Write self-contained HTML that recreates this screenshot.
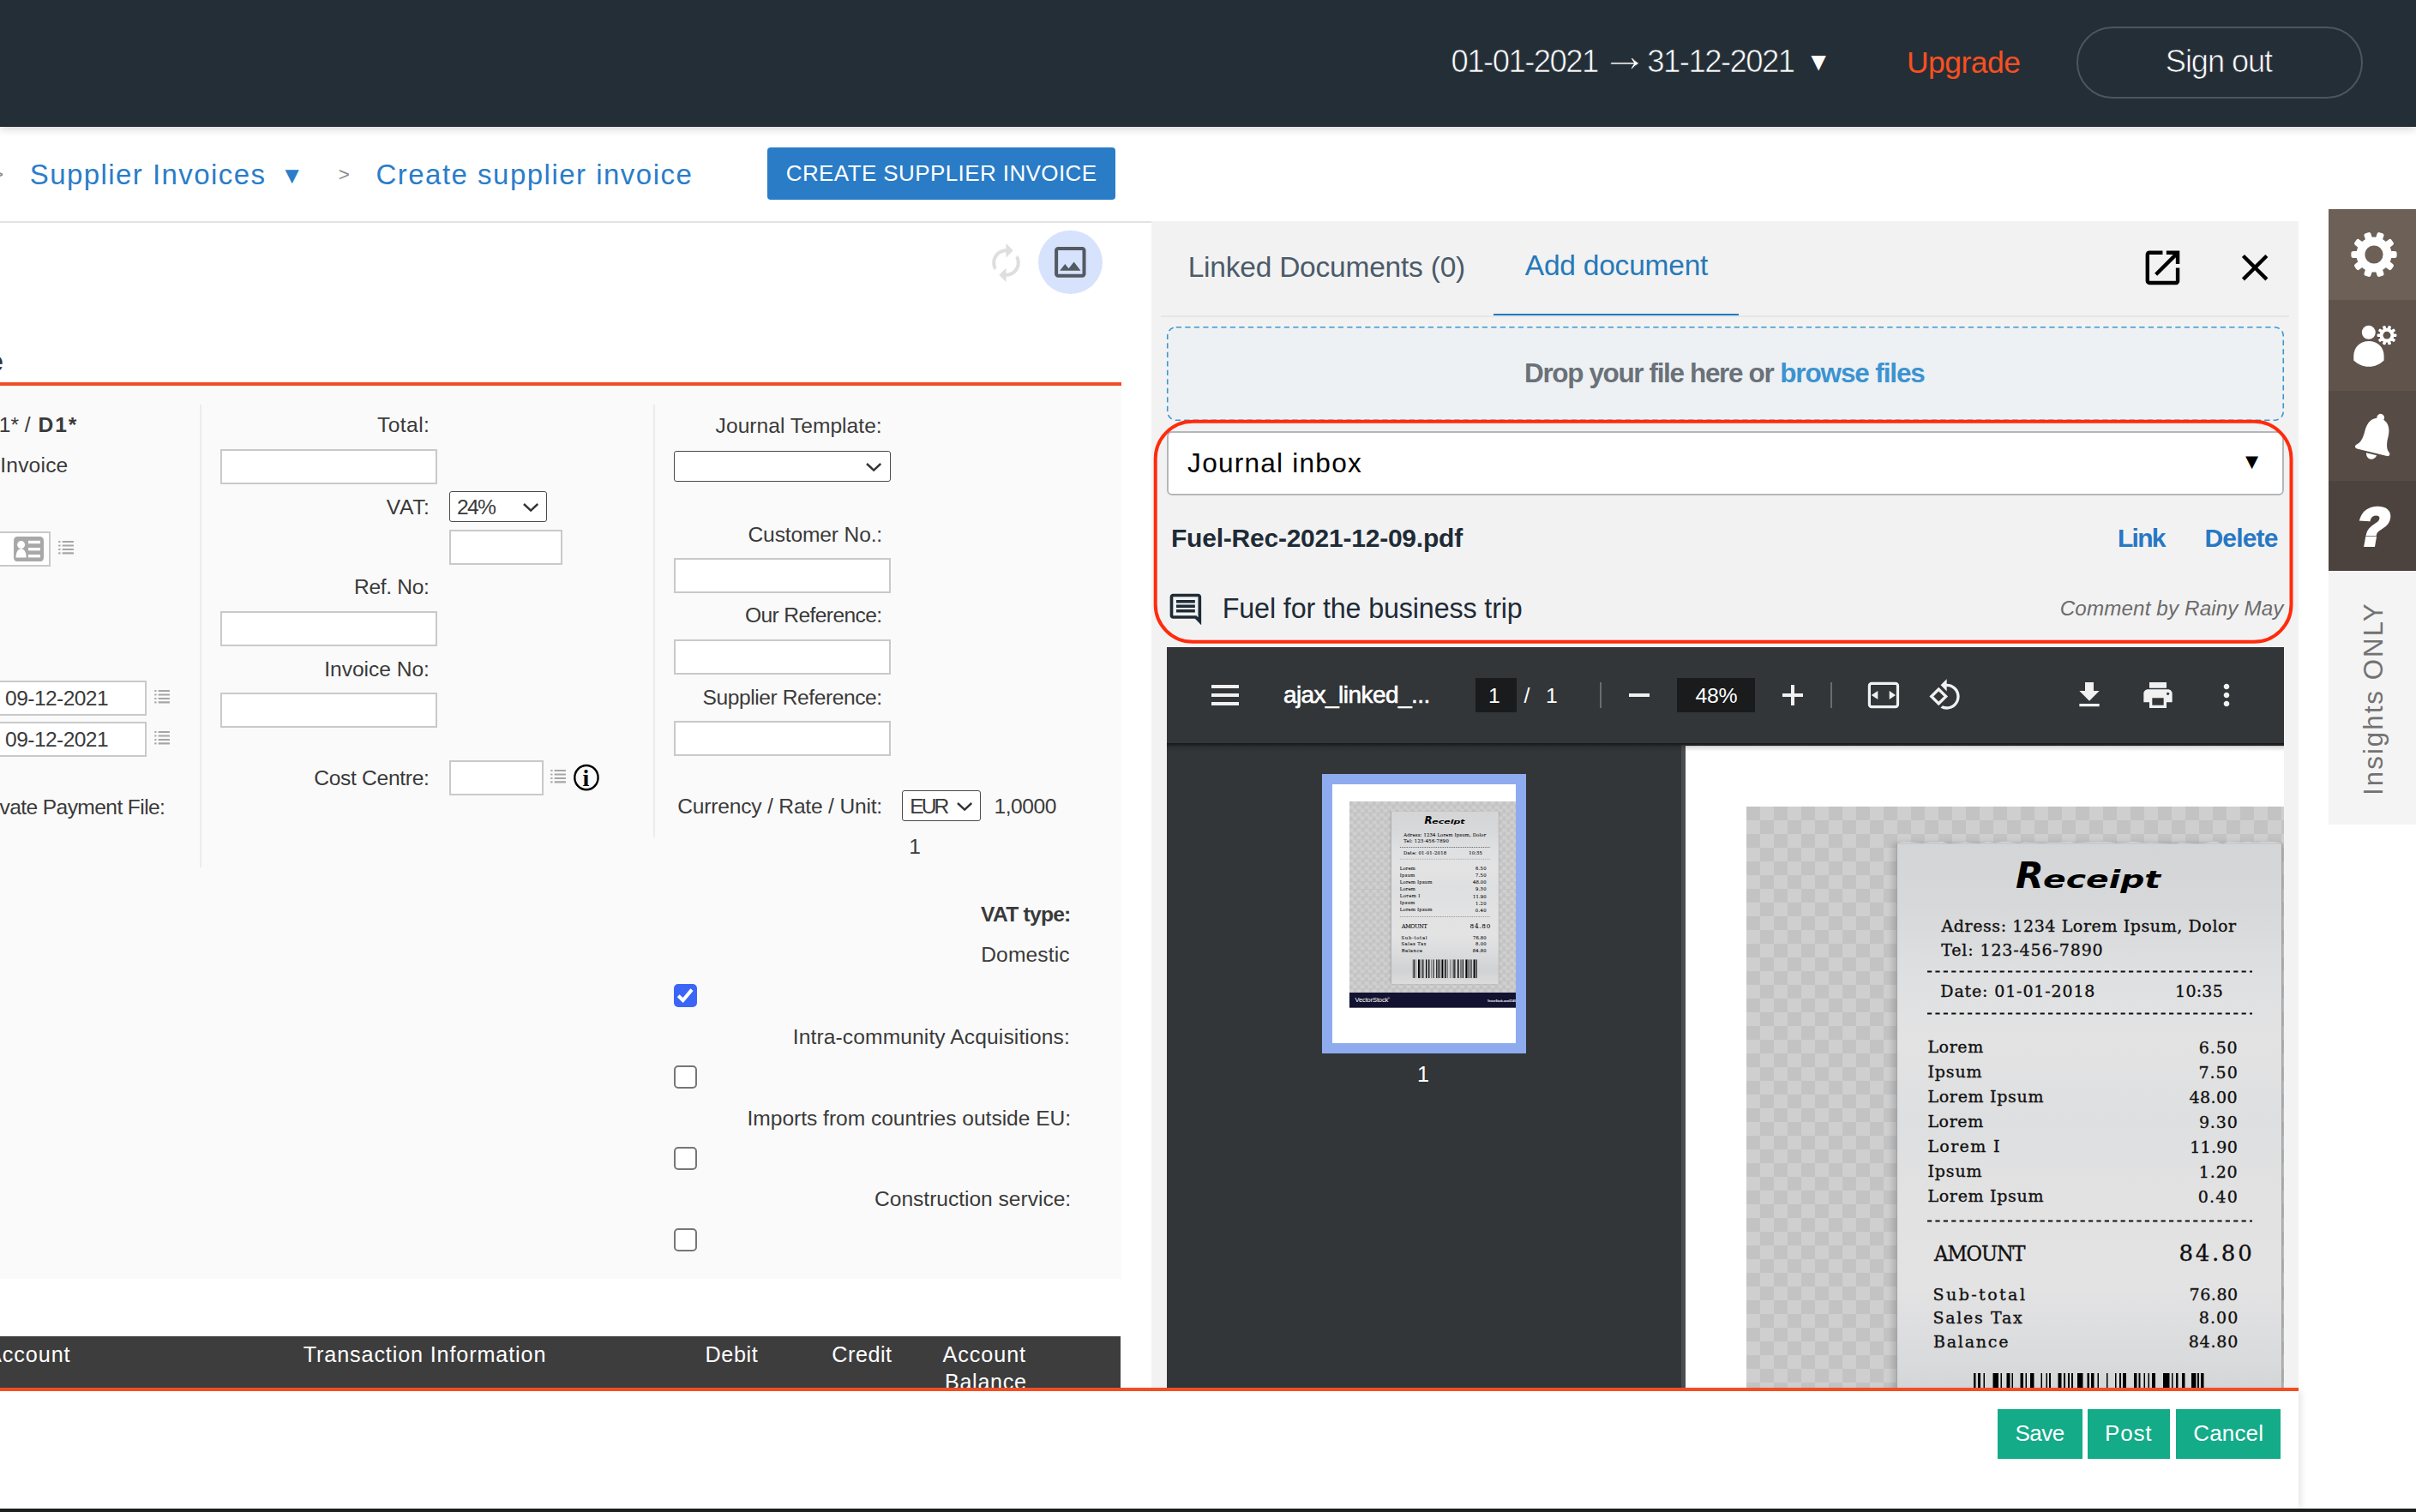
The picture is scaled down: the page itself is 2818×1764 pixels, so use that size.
<!DOCTYPE html>
<html lang="en"><head><meta charset="utf-8"><title>Create supplier invoice</title>
<style>
html,body{margin:0;padding:0}
body{width:2818px;height:1764px;position:relative;overflow:hidden;background:#fff;font-family:"Liberation Sans",sans-serif}
div,.a,.t{position:absolute;box-sizing:border-box}
.t{white-space:pre;line-height:1}
#w{left:0;top:0;width:2818px;height:1764px;overflow:hidden}
</style></head>
<body>
<div id="w">
<div style="left:0px;top:450px;width:1308px;height:1042px;background:#fafafa"></div>
<div style="left:233px;top:472px;width:2px;height:540px;background:#ececec"></div>
<div style="left:762px;top:472px;width:2px;height:505px;background:#ececec"></div>
<span class="t" style="left:-1.25px;top:483.5px;font-size:24.6px;color:#3a3a3a;">1* / </span>
<span class="t" style="left:44.62px;top:483.5px;font-size:24.6px;color:#3a3a3a;letter-spacing:1.902px;font-weight:700;">D1*</span>
<span class="t" style="left:0.25px;top:531.25px;font-size:24.6px;color:#3a3a3a;letter-spacing:0.186px;">Invoice</span>
<div style="left:-20px;top:620px;width:79px;height:41px;box-sizing:border-box;border:2px solid #c9c9c9;background:#fff"></div>
<svg class="a" style="left:16px;top:625.6px" width="35" height="29.4" viewBox="0 0 35 29.4"><rect x="0" y="0" width="35" height="29.4" rx="4.6" fill="#a8a8a8"/><circle cx="8.6" cy="9.6" r="4.5" fill="#fff"/><path d="M2.5 24.4c0-6.2 2.6-10.2 6.1-10.2s6.1 4 6.1 10.2z" fill="#fff"/><rect x="17" y="4.8" width="14" height="3.4" fill="#fff"/><rect x="17" y="13" width="14" height="3.4" fill="#fff"/><rect x="17" y="21" width="14" height="3.4" fill="#fff"/></svg>
<svg class="a" style="left:67.9px;top:631.2px" width="19" height="17" viewBox="0 0 19 17"><rect x="0" y="0.00" width="2.7" height="2.1" rx=".8" fill="#adadad"/><rect x="4.6" y="0.00" width="13.4" height="2.1" rx=".5" fill="#a6a6a6"/><rect x="0" y="4.45" width="2.7" height="2.1" rx=".8" fill="#adadad"/><rect x="4.6" y="4.45" width="13.4" height="2.1" rx=".5" fill="#a6a6a6"/><rect x="0" y="8.90" width="2.7" height="2.1" rx=".8" fill="#adadad"/><rect x="4.6" y="8.90" width="13.4" height="2.1" rx=".5" fill="#a6a6a6"/><rect x="0" y="13.35" width="2.7" height="2.1" rx=".8" fill="#adadad"/><rect x="4.6" y="13.35" width="13.4" height="2.1" rx=".5" fill="#a6a6a6"/></svg>
<div style="left:-20px;top:794px;width:191px;height:41px;box-sizing:border-box;border:2px solid #c9c9c9;background:#fff"></div>
<div style="left:-20px;top:842px;width:191px;height:41px;box-sizing:border-box;border:2px solid #c9c9c9;background:#fff"></div>
<span class="t" style="left:6.12px;top:802.5px;font-size:24.6px;color:#3a3a3a;letter-spacing:-0.586px;">09-12-2021</span>
<span class="t" style="left:6.12px;top:850.5px;font-size:24.6px;color:#3a3a3a;letter-spacing:-0.586px;">09-12-2021</span>
<svg class="a" style="left:180px;top:805.1px" width="19" height="17" viewBox="0 0 19 17"><rect x="0" y="0.00" width="2.7" height="2.1" rx=".8" fill="#adadad"/><rect x="4.6" y="0.00" width="13.4" height="2.1" rx=".5" fill="#a6a6a6"/><rect x="0" y="4.45" width="2.7" height="2.1" rx=".8" fill="#adadad"/><rect x="4.6" y="4.45" width="13.4" height="2.1" rx=".5" fill="#a6a6a6"/><rect x="0" y="8.90" width="2.7" height="2.1" rx=".8" fill="#adadad"/><rect x="4.6" y="8.90" width="13.4" height="2.1" rx=".5" fill="#a6a6a6"/><rect x="0" y="13.35" width="2.7" height="2.1" rx=".8" fill="#adadad"/><rect x="4.6" y="13.35" width="13.4" height="2.1" rx=".5" fill="#a6a6a6"/></svg>
<svg class="a" style="left:180px;top:853.1px" width="19" height="17" viewBox="0 0 19 17"><rect x="0" y="0.00" width="2.7" height="2.1" rx=".8" fill="#adadad"/><rect x="4.6" y="0.00" width="13.4" height="2.1" rx=".5" fill="#a6a6a6"/><rect x="0" y="4.45" width="2.7" height="2.1" rx=".8" fill="#adadad"/><rect x="4.6" y="4.45" width="13.4" height="2.1" rx=".5" fill="#a6a6a6"/><rect x="0" y="8.90" width="2.7" height="2.1" rx=".8" fill="#adadad"/><rect x="4.6" y="8.90" width="13.4" height="2.1" rx=".5" fill="#a6a6a6"/><rect x="0" y="13.35" width="2.7" height="2.1" rx=".8" fill="#adadad"/><rect x="4.6" y="13.35" width="13.4" height="2.1" rx=".5" fill="#a6a6a6"/></svg>
<span class="t" style="left:-0.5px;top:929.5px;font-size:24.6px;color:#3a3a3a;letter-spacing:-0.603px;">vate Payment File:</span>
<span class="t" style="left:440.0px;top:484.25px;font-size:24.6px;color:#3a3a3a;letter-spacing:0.433px;">Total:</span>
<span class="t" style="left:450.75px;top:579.5px;font-size:24.6px;color:#3a3a3a;letter-spacing:0.637px;">VAT:</span>
<span class="t" style="left:413px;top:673px;font-size:24.6px;color:#3a3a3a;letter-spacing:-0.324px;">Ref. No:</span>
<span class="t" style="left:378.25px;top:768.5px;font-size:24.6px;color:#3a3a3a;letter-spacing:-0.035px;">Invoice No:</span>
<span class="t" style="left:366.25px;top:895.5px;font-size:24.6px;color:#3a3a3a;letter-spacing:-0.307px;">Cost Centre:</span>
<div style="left:257px;top:524px;width:253px;height:41px;box-sizing:border-box;border:2px solid #c9c9c9;background:#fff"></div>
<div style="left:257px;top:713px;width:253px;height:41px;box-sizing:border-box;border:2px solid #c9c9c9;background:#fff"></div>
<div style="left:257px;top:808px;width:253px;height:41px;box-sizing:border-box;border:2px solid #c9c9c9;background:#fff"></div>
<div style="left:524px;top:618px;width:132px;height:41px;box-sizing:border-box;border:2px solid #c9c9c9;background:#fff"></div>
<div style="left:524px;top:887px;width:110px;height:41px;box-sizing:border-box;border:2px solid #c9c9c9;background:#fff"></div>
<div style="left:524px;top:573px;width:114px;height:36px;box-sizing:border-box;border:1.5px solid #4a4a4a;border-radius:3px;background:#fff"></div>
<svg class="a" style="left:607.5px;top:585px" width="22.25" height="13.75" viewBox="607.5 585 22.25 13.75"><path d="M610.5 588 L618.625 595.55 L626.75 588" fill="none" stroke="#333" stroke-width="2.4"/></svg>
<span class="t" style="left:533.12px;top:579.5px;font-size:24.6px;color:#3a3a3a;letter-spacing:-1.744px;">24%</span>
<svg class="a" style="left:642px;top:898.2px" width="19" height="17" viewBox="0 0 19 17"><rect x="0" y="0.00" width="2.7" height="2.1" rx=".8" fill="#adadad"/><rect x="4.6" y="0.00" width="13.4" height="2.1" rx=".5" fill="#a6a6a6"/><rect x="0" y="4.45" width="2.7" height="2.1" rx=".8" fill="#adadad"/><rect x="4.6" y="4.45" width="13.4" height="2.1" rx=".5" fill="#a6a6a6"/><rect x="0" y="8.90" width="2.7" height="2.1" rx=".8" fill="#adadad"/><rect x="4.6" y="8.90" width="13.4" height="2.1" rx=".5" fill="#a6a6a6"/><rect x="0" y="13.35" width="2.7" height="2.1" rx=".8" fill="#adadad"/><rect x="4.6" y="13.35" width="13.4" height="2.1" rx=".5" fill="#a6a6a6"/></svg>
<svg class="a" style="left:667px;top:890px" width="34" height="35" viewBox="667 890 34 35"><ellipse cx="683.95" cy="907.15" rx="13.65" ry="14.15" fill="none" stroke="#000" stroke-width="2.4"/></svg>
<span class="t" style="left:679.4px;top:893.7px;font-size:28px;color:#000;font-weight:700;font-family:'Liberation Serif',serif;">i</span>
<span class="t" style="left:834.62px;top:484.5px;font-size:24.6px;color:#3a3a3a;letter-spacing:0.026px;">Journal Template:</span>
<span class="t" style="left:872.5px;top:611.5px;font-size:24.6px;color:#3a3a3a;letter-spacing:-0.156px;">Customer No.:</span>
<span class="t" style="left:868.88px;top:706px;font-size:24.6px;color:#3a3a3a;letter-spacing:-0.603px;">Our Reference:</span>
<span class="t" style="left:819.5px;top:801.5px;font-size:24.6px;color:#3a3a3a;letter-spacing:-0.428px;">Supplier Reference:</span>
<span class="t" style="left:790.25px;top:928.5px;font-size:24.6px;color:#3a3a3a;letter-spacing:-0.199px;">Currency / Rate / Unit:</span>
<div style="left:786px;top:526px;width:253px;height:36px;box-sizing:border-box;border:1.5px solid #4a4a4a;border-radius:3px;background:#fff"></div>
<svg class="a" style="left:1008px;top:537.5px" width="22.25" height="13.75" viewBox="1008 537.5 22.25 13.75"><path d="M1011 540.5 L1019.125 548.05 L1027.25 540.5" fill="none" stroke="#333" stroke-width="2.4"/></svg>
<div style="left:786px;top:651px;width:253px;height:41px;box-sizing:border-box;border:2px solid #c9c9c9;background:#fff"></div>
<div style="left:786px;top:746px;width:253px;height:41px;box-sizing:border-box;border:2px solid #c9c9c9;background:#fff"></div>
<div style="left:786px;top:841px;width:253px;height:41px;box-sizing:border-box;border:2px solid #c9c9c9;background:#fff"></div>
<div style="left:1052px;top:922px;width:92px;height:36px;box-sizing:border-box;border:1.5px solid #4a4a4a;border-radius:3px;background:#fff"></div>
<svg class="a" style="left:1113.5px;top:933.75px" width="22.25" height="13.75" viewBox="1113.5 933.75 22.25 13.75"><path d="M1116.5 936.75 L1124.625 944.3 L1132.75 936.75" fill="none" stroke="#333" stroke-width="2.4"/></svg>
<span class="t" style="left:1061.25px;top:928.5px;font-size:24.6px;color:#3a3a3a;letter-spacing:-2.899px;">EUR</span>
<span class="t" style="left:1159.5px;top:928.5px;font-size:24.6px;color:#3a3a3a;letter-spacing:-0.462px;">1,0000</span>
<span class="t" style="left:1060.25px;top:975.5px;font-size:24.6px;color:#3a3a3a;">1</span>
<span class="t" style="left:1144.12px;top:1054.5px;font-size:24.6px;color:#3a3a3a;letter-spacing:-0.745px;font-weight:700;">VAT type:</span>
<span class="t" style="left:1144.25px;top:1102.25px;font-size:24.6px;color:#3a3a3a;letter-spacing:0.112px;">Domestic</span>
<span class="t" style="left:924.75px;top:1197.75px;font-size:24.6px;color:#3a3a3a;letter-spacing:0.114px;">Intra-community Acquisitions:</span>
<span class="t" style="left:871.5px;top:1292.5px;font-size:24.6px;color:#3a3a3a;letter-spacing:-0.03px;">Imports from countries outside EU:</span>
<span class="t" style="left:1020.0px;top:1387.25px;font-size:24.6px;color:#3a3a3a;letter-spacing:-0.024px;">Construction service:</span>
<div style="left:786px;top:1148px;width:26.5px;height:26.5px;background:#3b66f5;border-radius:5px"></div>
<svg class="a" style="left:786px;top:1148px" width="26.5" height="26.5" viewBox="0 0 26.5 26.5"><path d="M5.2 13.8 L10.6 19 L21 6.6" fill="none" stroke="#fff" stroke-width="4"/></svg>
<div style="left:786px;top:1243.25px;width:26.5px;height:26.5px;box-sizing:border-box;border:2px solid #767676;border-radius:5px;background:#fff"></div>
<div style="left:786px;top:1338.25px;width:26.5px;height:26.5px;box-sizing:border-box;border:2px solid #767676;border-radius:5px;background:#fff"></div>
<div style="left:786px;top:1433.25px;width:26.5px;height:26.5px;box-sizing:border-box;border:2px solid #767676;border-radius:5px;background:#fff"></div>
<div style="left:0px;top:1559px;width:1307px;height:64px;background:#3d3d3d"></div>
<span class="t" style="left:-15px;top:1568.25px;font-size:25.2px;color:#fff;letter-spacing:0.929px;">Account</span>
<span class="t" style="left:353.75px;top:1568.25px;font-size:25.2px;color:#fff;letter-spacing:0.863px;">Transaction Information</span>
<span class="t" style="left:822.5px;top:1568.25px;font-size:25.2px;color:#fff;letter-spacing:0.637px;">Debit</span>
<span class="t" style="left:970.25px;top:1568.25px;font-size:25.2px;color:#fff;letter-spacing:0.532px;">Credit</span>
<span class="t" style="left:1099.5px;top:1568.25px;font-size:25.2px;color:#fff;letter-spacing:0.929px;">Account</span>
<span class="t" style="left:1102px;top:1600px;font-size:25.2px;color:#fff;letter-spacing:0.658px;">Balance</span>
<div style="left:0px;top:0px;width:2818px;height:148px;background:#242e37;box-shadow:0 2px 10px rgba(0,0,0,.18);z-index:5"></div>
<span class="t" style="left:1692.61px;top:53.75px;font-size:36.5px;color:#fff;letter-spacing:-1.565px;z-index:6;-webkit-text-stroke:.7px #242e37;">01-01-2021</span>
<span class="t" style="left:1867.63px;top:37.31px;font-size:54.74px;color:#fff;z-index:6;-webkit-text-stroke:.8px #242e37;">→</span>
<span class="t" style="left:1921.36px;top:53.75px;font-size:36.5px;color:#fff;letter-spacing:-1.565px;z-index:6;-webkit-text-stroke:.7px #242e37;">31-12-2021</span>
<span class="t" style="left:2106.62px;top:57.04px;font-size:29.54px;color:#fff;z-index:6;">▼</span>
<span class="t" style="left:2224.03px;top:55.5px;font-size:35.5px;color:#f8501f;letter-spacing:-0.545px;z-index:6;">Upgrade</span>
<div style="left:2422px;top:30.75px;width:334px;height:83.75px;border:2px solid #4b565e;border-radius:42px;z-index:6"></div>
<span class="t" style="left:2525.87px;top:54.4px;font-size:36.2px;color:#fff;letter-spacing:-1.082px;z-index:6;-webkit-text-stroke:.7px #242e37;">Sign out</span>
<span class="t" style="left:-9.32px;top:192.48px;font-size:22.8px;color:#8a8a8a;">&gt;</span>
<span class="t" style="left:34.72px;top:186.5px;font-size:33px;color:#2a7dc8;letter-spacing:1.438px;">Supplier Invoices</span>
<span class="t" style="left:327.0px;top:190.82px;font-size:27.49px;color:#2a7dc8;">▼</span>
<span class="t" style="left:394.75px;top:193.38px;font-size:22.5px;color:#8a8a8a;">&gt;</span>
<span class="t" style="left:438.45px;top:186.5px;font-size:33px;color:#2a7dc8;letter-spacing:1.487px;">Create supplier invoice</span>
<div style="left:895px;top:172px;width:406px;height:60.75px;background:#2a7cc7;border-radius:4px"></div>
<span class="t" style="left:916.75px;top:189.1px;font-size:26px;color:#fff;letter-spacing:0.402px;">CREATE SUPPLIER INVOICE</span>
<div style="left:0px;top:258px;width:1343px;height:2px;background:#e3e3e3"></div>
<svg class="a" style="left:1148.6px;top:281.6px" width="49" height="49" viewBox="0 0 24 24"><path fill="#dedede" d="M12 6v3l4-4-4-4v3c-4.42 0-8 3.58-8 8 0 1.57.46 3.03 1.24 4.26L6.7 14.8c-.45-.83-.7-1.79-.7-2.8 0-3.31 2.69-6 6-6zm6.76 1.74L17.3 9.2c.44.84.7 1.79.7 2.8 0 3.31-2.69 6-6 6v-3l-4 4 4 4v-3c4.42 0 8-3.58 8-8 0-1.57-.46-3.03-1.24-4.26z"/></svg>
<svg class="a" style="left:1210px;top:267px" width="78" height="78" viewBox="1210 267 78 78"><ellipse cx="1248.5" cy="305.9" rx="37.5" ry="37.1" fill="#d7e3fc"/></svg>
<svg class="a" style="left:1224.1px;top:281.9px" width="48.6" height="47.6" viewBox="0 0 24 24" preserveAspectRatio="none"><path fill="#545a62" d="M19 5v14H5V5h14m0-2H5c-1.1 0-2 .9-2 2v14c0 1.1.9 2 2 2h14c1.1 0 2-.9 2-2V5c0-1.1-.9-2-2-2zm-4.86 8.86l-3 3.87L9 13.14 6 17h12l-3.86-5.14z"/></svg>
<span class="t" style="left:-359.31px;top:404.5px;font-size:33px;color:#333;font-weight:700;">Create supplier invoice</span>
<div style="left:0px;top:446px;width:1308px;height:4px;background:#f14e23"></div>
<div style="left:1343px;top:258px;width:1338px;height:1361px;background:#f2f2f2"></div>
<span class="t" style="left:1385.63px;top:295px;font-size:33.5px;color:#4b5b6a;letter-spacing:-0.216px;">Linked Documents (0)</span>
<span class="t" style="left:1778.75px;top:293.3px;font-size:33.5px;color:#2679b8;letter-spacing:-0.218px;">Add document</span>
<div style="left:1354px;top:368px;width:1316px;height:2px;background:#e6e6e6"></div>
<div style="left:1742px;top:365.5px;width:286px;height:2.5px;background:#1f7ac0"></div>
<svg class="a" style="left:2496.1px;top:285.9px" width="52.9" height="52.9" viewBox="0 0 24 24"><path fill="#000" d="M19 19H5V5h7V3H5c-1.11 0-2 .9-2 2v14c0 1.1.89 2 2 2h14c1.1 0 2-.9 2-2v-7h-2v7zM14 3v2h3.59l-9.83 9.83 1.41 1.41L19 6.41V10h2V3h-7z"/></svg>
<svg class="a" style="left:2604.3px;top:286.3px" width="52.3" height="52.3" viewBox="0 0 24 24"><path fill="#000" d="M19 6.41L17.59 5 12 10.59 6.41 5 5 6.41 10.59 12 5 17.59 6.41 19 12 13.41 17.59 19 19 17.59 13.41 12z"/></svg>
<svg class="a" style="left:1360px;top:380px" width="1305" height="112" viewBox="0 0 1305 112"><rect x="1.75" y="1.75" width="1301.5" height="108.5" rx="10" fill="#edf1f4" stroke="#3f97cd" stroke-width="1.6" stroke-dasharray="6.3 4.2"/></svg>
<span class="t" style="left:1778px;top:420.4px;font-size:31.5px;color:#6b7178;letter-spacing:-1.365px;font-weight:700;">Drop your file here or</span>
<span class="t" style="left:2076.25px;top:420.4px;font-size:31.5px;color:#3c93d0;letter-spacing:-1.14px;font-weight:700;">browse files</span>
<div style="left:1361px;top:502.5px;width:1303px;height:75.5px;box-sizing:border-box;border:2px solid #b4b7ba;border-radius:6px;background:#fff"></div>
<span class="t" style="left:1385.12px;top:525px;font-size:31.6px;color:#000;letter-spacing:1.226px;">Journal inbox</span>
<span class="t" style="left:2613.88px;top:525.6px;font-size:25.44px;color:#000;">▼</span>
<span class="t" style="left:1366px;top:613px;font-size:30px;color:#1e2b37;letter-spacing:-0.227px;font-weight:700;">Fuel-Rec-2021-12-09.pdf</span>
<span class="t" style="left:2470px;top:612.5px;font-size:30px;color:#2778c4;letter-spacing:-1.745px;font-weight:700;">Link</span>
<span class="t" style="left:2571.5px;top:612.5px;font-size:30px;color:#2778c4;letter-spacing:-0.822px;font-weight:700;">Delete</span>
<svg class="a" style="left:1361.35px;top:689.35px" width="43.8" height="43.8" viewBox="0 0 24 24"><path fill="#1e2b37" d="M21.99 4c0-1.1-.89-2-1.99-2H4c-1.1 0-2 .9-2 2v12c0 1.1.9 2 2 2h14l4 4-.01-18zM20 4v13.17L18.83 16H4V4h16zM6 12h12v2H6zm0-3h12v2H6zm0-3h12v2H6z"/></svg>
<span class="t" style="left:1425.73px;top:694px;font-size:32.3px;color:#1e2b37;letter-spacing:-0.144px;">Fuel for the business trip</span>
<span class="t" style="left:2402.75px;top:698px;font-size:24.2px;color:#6b6b6b;letter-spacing:0.133px;font-style:italic;">Comment by Rainy May</span>
<svg class="a" style="left:1343px;top:487px;z-index:15" width="1334" height="267" viewBox="1343 487 1334 267"><rect x="1347.7" y="491.8" width="1324.8" height="257" rx="43.5" fill="none" stroke="#ff2b0c" stroke-width="4"/></svg>
<div style="left:1361px;top:755px;width:1303px;height:864px;background:#323639"></div>
<div style="left:1961px;top:869px;width:5px;height:750px;background:#4a4d51"></div>
<div style="left:1966px;top:869.5px;width:698px;height:750px;background:#fff;overflow:hidden"><div style="left:71px;top:71.5px;width:720px;height:864px;overflow:hidden"><div style="left:0px;top:0px;width:720px;height:864px;background:repeating-conic-gradient(#cfcfcf 0% 25%,#c3c3c3 0% 50%) 0 0/32px 32px"></div>
<div style="left:174.69999999999982px;top:42.60000000000002px;width:450.3000000000002px;height:721.4px;background:linear-gradient(180deg,#d4d5d7 0%,#d7d8da 10%,#dfe0e1 22%,#e3e3e4 32%,#dedfe0 45%,#e2e2e3 58%,#e3e3e4 72%,#d9dadc 84%,#d1d2d4 92%,#dcdcdd 100%);box-shadow:-4px 0 7px rgba(0,0,0,.16),2px 0 3px rgba(0,0,0,.14);border-left:1.5px solid #a3a3a3;border-right:1.5px solid #a3a3a3;box-sizing:border-box"></div>
<svg class="a" style="left:174.69999999999982px;top:39.60000000000002px" width="450.3" height="4" viewBox="0 0 450.3 4"><polygon fill="#d4d5d7" stroke="#b4b5b7" stroke-width=".6" points="0,3 6.4,0.3 13.8,0.5 19.2,1.3 29.7,2.6 39.3,0.7 47.5,0.9 53.5,0.3 59.8,3.0 69.8,2.6 79.6,0.6 86.5,2.0 95.9,2.7 106.1,0.3 114.8,2.1 122.8,0.6 130.7,0.3 141.3,2.8 149.5,1.0 160.0,1.8 170.3,2.7 178.3,1.3 186.9,1.4 192.9,1.0 202.8,0.1 208.1,2.0 214.7,1.7 222.6,1.1 233.6,0.6 241.0,0.6 249.8,0.9 257.0,2.4 263.9,1.8 274.3,0.3 279.7,0.7 289.3,2.0 295.7,1.1 301.8,1.5 307.0,2.2 317.4,3.1 326.8,3.1 331.9,0.9 342.7,2.5 350.2,3.0 358.9,2.6 365.7,0.6 373.3,0.4 380.6,3.1 387.6,0.0 392.9,0.5 402.6,1.2 409.3,0.3 420.2,1.4 426.4,0.2 431.8,0.5 440.8,0.5 446.1,1.6 450.3,3.2 450.3,3"/></svg>
<span class="t" style="left:314px;top:60px;font-size:27.5px;font-family:'DejaVu Sans',sans-serif;font-weight:700;font-style:italic;color:#000"><span style="font-size:42.5px">R</span><span style="display:inline-block;margin-left:-1px;transform:scaleX(1.43);transform-origin:0 50%">eceipt</span></span>
<span class="t" style="left:227.43px;top:129.5px;font-size:19px;color:#111;letter-spacing:0.591px;font-family:'DejaVu Serif',serif;-webkit-text-stroke:.35px #111;">Adress: 1234 Lorem Ipsum, Dolor</span>
<span class="t" style="left:227.18px;top:158.2px;font-size:19px;color:#111;letter-spacing:0.866px;font-family:'DejaVu Serif',serif;-webkit-text-stroke:.35px #111;">Tel: 123-456-7890</span>
<span class="t" style="left:226.3px;top:206px;font-size:19px;color:#111;letter-spacing:0.846px;font-family:'DejaVu Serif',serif;-webkit-text-stroke:.35px #111;">Date: 01-01-2018</span>
<span class="t" style="left:500.05px;top:206px;font-size:19px;color:#111;letter-spacing:0.24px;font-family:'DejaVu Serif',serif;-webkit-text-stroke:.35px #111;">10:35</span>
<span class="t" style="left:211.4px;top:271px;font-size:19px;color:#111;letter-spacing:0.604px;font-family:'DejaVu Serif',serif;-webkit-text-stroke:.35px #111;">Lorem</span>
<span class="t" style="left:527.75px;top:272px;font-size:19px;color:#111;letter-spacing:0.886px;font-family:'DejaVu Serif',serif;-webkit-text-stroke:.35px #111;">6.50</span>
<span class="t" style="left:211.4px;top:300px;font-size:19px;color:#111;letter-spacing:0.861px;font-family:'DejaVu Serif',serif;-webkit-text-stroke:.35px #111;">Ipsum</span>
<span class="t" style="left:527.5px;top:301px;font-size:19px;color:#111;letter-spacing:0.97px;font-family:'DejaVu Serif',serif;-webkit-text-stroke:.35px #111;">7.50</span>
<span class="t" style="left:211.4px;top:329px;font-size:19px;color:#111;letter-spacing:0.701px;font-family:'DejaVu Serif',serif;-webkit-text-stroke:.35px #111;">Lorem Ipsum</span>
<span class="t" style="left:516.5px;top:330px;font-size:19px;color:#111;letter-spacing:0.455px;font-family:'DejaVu Serif',serif;-webkit-text-stroke:.35px #111;">48.00</span>
<span class="t" style="left:211.4px;top:358px;font-size:19px;color:#111;letter-spacing:0.604px;font-family:'DejaVu Serif',serif;-webkit-text-stroke:.35px #111;">Lorem</span>
<span class="t" style="left:527.88px;top:359px;font-size:19px;color:#111;letter-spacing:0.845px;font-family:'DejaVu Serif',serif;-webkit-text-stroke:.35px #111;">9.30</span>
<span class="t" style="left:211.4px;top:387px;font-size:19px;color:#111;letter-spacing:1.36px;font-family:'DejaVu Serif',serif;-webkit-text-stroke:.35px #111;">Lorem I</span>
<span class="t" style="left:517.25px;top:388px;font-size:19px;color:#111;letter-spacing:0.268px;font-family:'DejaVu Serif',serif;-webkit-text-stroke:.35px #111;">11.90</span>
<span class="t" style="left:211.4px;top:416px;font-size:19px;color:#111;letter-spacing:0.861px;font-family:'DejaVu Serif',serif;-webkit-text-stroke:.35px #111;">Ipsum</span>
<span class="t" style="left:527.75px;top:417px;font-size:19px;color:#111;letter-spacing:0.886px;font-family:'DejaVu Serif',serif;-webkit-text-stroke:.35px #111;">1.20</span>
<span class="t" style="left:211.4px;top:445px;font-size:19px;color:#111;letter-spacing:0.701px;font-family:'DejaVu Serif',serif;-webkit-text-stroke:.35px #111;">Lorem Ipsum</span>
<span class="t" style="left:526.75px;top:446px;font-size:19px;color:#111;letter-spacing:1.22px;font-family:'DejaVu Serif',serif;-webkit-text-stroke:.35px #111;">0.40</span>
<svg class="a" style="left:211px;top:190.7px" width="379" height="3" viewBox="0 0 379 3"><line x1="0" y1="1.5" x2="379" y2="1.5" stroke="#111" stroke-width="2" stroke-dasharray="5.2 4.2"/></svg>
<svg class="a" style="left:211px;top:240.2px" width="379" height="3" viewBox="0 0 379 3"><line x1="0" y1="1.5" x2="379" y2="1.5" stroke="#111" stroke-width="2" stroke-dasharray="5.2 4.2"/></svg>
<svg class="a" style="left:211px;top:482.0px" width="379" height="3" viewBox="0 0 379 3"><line x1="0" y1="1.5" x2="379" y2="1.5" stroke="#111" stroke-width="2" stroke-dasharray="5.2 4.2"/></svg>
<span class="t" style="left:219.12px;top:508.5px;font-size:25px;color:#111;letter-spacing:-0.972px;font-family:'DejaVu Serif Condensed','DejaVu Serif',serif;-webkit-text-stroke:.35px #111;">AMOUNT</span>
<span class="t" style="left:504.38px;top:507.5px;font-size:26px;color:#111;letter-spacing:2.715px;font-family:'DejaVu Serif',serif;-webkit-text-stroke:.35px #111;">84.80</span>
<span class="t" style="left:217.5px;top:559.5px;font-size:19px;color:#111;letter-spacing:2.438px;font-family:'DejaVu Serif',serif;-webkit-text-stroke:.35px #111;">Sub-total</span>
<span class="t" style="left:516.5px;top:559.5px;font-size:19px;color:#111;letter-spacing:0.58px;font-family:'DejaVu Serif',serif;-webkit-text-stroke:.35px #111;">76.80</span>
<span class="t" style="left:217.5px;top:587px;font-size:19px;color:#111;letter-spacing:1.69px;font-family:'DejaVu Serif',serif;-webkit-text-stroke:.35px #111;">Sales Tax</span>
<span class="t" style="left:527.75px;top:587px;font-size:19px;color:#111;letter-spacing:1.053px;font-family:'DejaVu Serif',serif;-webkit-text-stroke:.35px #111;">8.00</span>
<span class="t" style="left:218px;top:614.5px;font-size:19px;color:#111;letter-spacing:1.759px;font-family:'DejaVu Serif',serif;-webkit-text-stroke:.35px #111;">Balance</span>
<span class="t" style="left:515.75px;top:614.5px;font-size:19px;color:#111;letter-spacing:0.768px;font-family:'DejaVu Serif',serif;-webkit-text-stroke:.35px #111;">84.80</span>
<svg class="a" style="left:264px;top:661px" width="272" height="79" viewBox="0 0 272 79"><rect x="1.00" y="0" width="2.50" height="79" fill="#000"/><rect x="6.00" y="0" width="3.00" height="79" fill="#000"/><rect x="12.50" y="0" width="1.50" height="79" fill="#000"/><rect x="23.50" y="0" width="6.50" height="79" fill="#000"/><rect x="32.50" y="0" width="1.50" height="79" fill="#000"/><rect x="39.50" y="0" width="4.00" height="79" fill="#000"/><rect x="45.50" y="0" width="1.50" height="79" fill="#000"/><rect x="55.50" y="0" width="3.50" height="79" fill="#000"/><rect x="61.50" y="0" width="1.50" height="79" fill="#000"/><rect x="67.00" y="0" width="4.50" height="79" fill="#000"/><rect x="79.50" y="0" width="1.50" height="79" fill="#000"/><rect x="85.50" y="0" width="1.50" height="79" fill="#000"/><rect x="89.00" y="0" width="2.00" height="79" fill="#000"/><rect x="99.50" y="0" width="4.00" height="79" fill="#000"/><rect x="106.00" y="0" width="2.00" height="79" fill="#000"/><rect x="111.00" y="0" width="2.00" height="79" fill="#000"/><rect x="115.00" y="0" width="2.00" height="79" fill="#000"/><rect x="122.00" y="0" width="6.50" height="79" fill="#000"/><rect x="133.50" y="0" width="2.50" height="79" fill="#000"/><rect x="138.00" y="0" width="3.50" height="79" fill="#000"/><rect x="145.50" y="0" width="1.50" height="79" fill="#000"/><rect x="156.00" y="0" width="1.50" height="79" fill="#000"/><rect x="166.00" y="0" width="1.50" height="79" fill="#000"/><rect x="171.00" y="0" width="2.00" height="79" fill="#000"/><rect x="175.00" y="0" width="4.00" height="79" fill="#000"/><rect x="188.00" y="0" width="3.50" height="79" fill="#000"/><rect x="193.50" y="0" width="2.00" height="79" fill="#000"/><rect x="199.50" y="0" width="1.50" height="79" fill="#000"/><rect x="204.50" y="0" width="1.50" height="79" fill="#000"/><rect x="209.00" y="0" width="4.00" height="79" fill="#000"/><rect x="222.00" y="0" width="7.50" height="79" fill="#000"/><rect x="232.00" y="0" width="1.50" height="79" fill="#000"/><rect x="237.00" y="0" width="2.50" height="79" fill="#000"/><rect x="244.00" y="0" width="3.50" height="79" fill="#000"/><rect x="255.00" y="0" width="5.50" height="79" fill="#000"/><rect x="262.00" y="0" width="2.00" height="79" fill="#000"/><rect x="266.00" y="0" width="3.50" height="79" fill="#000"/></svg>
<div style="left:0px;top:800px;width:720px;height:64px;background:#131230"></div>
<span class="t" style="left:24px;top:819px;font-size:27px;color:#fff;letter-spacing:-0.5px;">VectorStock</span>
<span class="t" style="left:159.88px;top:819px;font-size:12px;color:#fff;">®</span>
<span class="t" style="left:578px;top:830px;font-size:11px;color:#fff;font-weight:700;">VectorStock.com/21405166</span></div></div>
<div style="left:1361px;top:755px;width:1303px;height:112px;background:#323639;z-index:11"></div>
<div style="left:1361px;top:867px;width:1303px;height:10px;background:linear-gradient(180deg,rgba(0,0,0,.55),rgba(0,0,0,.12) 45%,rgba(0,0,0,0));z-index:11"></div>
<div style="left:1413px;top:799px;width:32.25px;height:4px;background:#f1f1f1;z-index:12;"></div>
<div style="left:1413px;top:809px;width:32.25px;height:4px;background:#f1f1f1;z-index:12;"></div>
<div style="left:1413px;top:819px;width:32.25px;height:4px;background:#f1f1f1;z-index:12;"></div>
<span class="t" style="left:1496.88px;top:797px;font-size:28px;color:#fff;letter-spacing:-0.543px;z-index:12;-webkit-text-stroke:.6px #fff;">ajax_linked_...</span>
<div style="left:1721px;top:791px;width:48px;height:40px;background:#191b1c;z-index:12;"></div>
<span class="t" style="left:1736.12px;top:799.5px;font-size:24.8px;color:#fff;z-index:12;">1</span>
<span class="t" style="left:1777.5px;top:799.5px;font-size:24.8px;color:#fff;z-index:12;">/</span>
<span class="t" style="left:1803.12px;top:799.5px;font-size:24.8px;color:#fff;z-index:12;">1</span>
<div style="left:1866px;top:796px;width:2px;height:30px;background:#6a6d70;z-index:12;"></div>
<div style="left:1900px;top:808.75px;width:24px;height:4.25px;background:#f1f1f1;z-index:12;"></div>
<div style="left:1956px;top:791px;width:91px;height:40px;background:#191b1c;z-index:12;"></div>
<span class="t" style="left:1977.5px;top:799.5px;font-size:24.8px;color:#fff;letter-spacing:-0.292px;z-index:12;">48%</span>
<div style="left:2079px;top:808.9px;width:24px;height:4.2px;background:#f1f1f1;z-index:12;"></div>
<div style="left:2088.9px;top:799px;width:4.2px;height:24px;background:#f1f1f1;z-index:12;"></div>
<div style="left:2135px;top:796px;width:2px;height:30px;background:#6a6d70;z-index:12;"></div>
<svg class="a" style="left:2177px;top:794px;z-index:12" width="40" height="34" viewBox="2177 794 40 34"><rect x="2180.4" y="797.4" width="33.1" height="27.2" rx="2.6" fill="none" stroke="#f1f1f1" stroke-width="3.2"/><path fill="#f1f1f1" d="M2182.8 811 l7.5 -4.9 v9.8z M2211 811 l-7.3 -4.9 v9.8z"/></svg>
<svg class="a" style="left:2249px;top:791px;z-index:12" width="40" height="40" viewBox="0 0 24 24"><path fill="#f1f1f1" d="M7.34 6.41L.86 12.9l6.49 6.48 6.49-6.48-6.5-6.49zM3.69 12.9l3.66-3.66L11 12.9l-3.66 3.66-3.65-3.66zm15.67-6.26C17.61 4.88 15.3 4 13 4V.76L8.76 5 13 9.24V6c1.79 0 3.58.68 4.95 2.05 2.73 2.73 2.73 7.17 0 9.9C16.58 19.32 14.79 20 13 20c-.97 0-1.94-.21-2.84-.61l-1.49 1.49C10.02 21.62 11.51 22 13 22c2.3 0 4.61-.88 6.36-2.64 3.52-3.51 3.52-9.21 0-12.72z"/></svg>
<svg class="a" style="left:2417px;top:791px;z-index:12" width="40" height="40" viewBox="0 0 24 24"><path fill="#f1f1f1" d="M19 9h-4V3H9v6H5l7 7 7-7zM5 18v2h14v-2H5z"/></svg>
<svg class="a" style="left:2497px;top:791px;z-index:12" width="40" height="40" viewBox="0 0 24 24"><path fill="#f1f1f1" d="M19 8H5c-1.66 0-3 1.34-3 3v6h4v4h12v-4h4v-6c0-1.66-1.34-3-3-3zm-3 11H8v-5h8v5zm3-7c-.55 0-1-.45-1-1s.45-1 1-1 1 .45 1 1-.45 1-1 1zm-1-9H6v4h12V3z"/></svg>
<svg class="a" style="left:2577px;top:791px;z-index:12" width="40" height="40" viewBox="0 0 24 24"><path fill="#f1f1f1" d="M12 8c1.1 0 2-.9 2-2s-.9-2-2-2-2 .9-2 2 .9 2 2 2zm0 2c-1.1 0-2 .9-2 2s.9 2 2 2 2-.9 2-2-.9-2-2-2zm0 6c-1.1 0-2 .9-2 2s.9 2 2 2 2-.9 2-2-.9-2-2-2z"/></svg>
<div style="left:1542px;top:903px;width:238px;height:326px;background:#8fabf0"></div>
<div style="left:1554px;top:915px;width:214.2px;height:302px;background:#fff;overflow:hidden"><div style="left:0;top:0;width:768px;height:1083px;transform:scale(0.279);transform-origin:0 0"><div style="left:71px;top:71px;width:720px;height:864px;overflow:hidden"><div style="left:0px;top:0px;width:720px;height:864px;background:repeating-conic-gradient(#cfcfcf 0% 25%,#c3c3c3 0% 50%) 0 0/32px 32px"></div>
<div style="left:174.69999999999982px;top:42.60000000000002px;width:450.3000000000002px;height:721.4px;background:linear-gradient(180deg,#d4d5d7 0%,#d7d8da 10%,#dfe0e1 22%,#e3e3e4 32%,#dedfe0 45%,#e2e2e3 58%,#e3e3e4 72%,#d9dadc 84%,#d1d2d4 92%,#dcdcdd 100%);box-shadow:-4px 0 7px rgba(0,0,0,.16),2px 0 3px rgba(0,0,0,.14);border-left:1.5px solid #a3a3a3;border-right:1.5px solid #a3a3a3;box-sizing:border-box"></div>
<svg class="a" style="left:174.69999999999982px;top:39.60000000000002px" width="450.3" height="4" viewBox="0 0 450.3 4"><polygon fill="#d4d5d7" stroke="#b4b5b7" stroke-width=".6" points="0,3 6.4,0.3 13.8,0.5 19.2,1.3 29.7,2.6 39.3,0.7 47.5,0.9 53.5,0.3 59.8,3.0 69.8,2.6 79.6,0.6 86.5,2.0 95.9,2.7 106.1,0.3 114.8,2.1 122.8,0.6 130.7,0.3 141.3,2.8 149.5,1.0 160.0,1.8 170.3,2.7 178.3,1.3 186.9,1.4 192.9,1.0 202.8,0.1 208.1,2.0 214.7,1.7 222.6,1.1 233.6,0.6 241.0,0.6 249.8,0.9 257.0,2.4 263.9,1.8 274.3,0.3 279.7,0.7 289.3,2.0 295.7,1.1 301.8,1.5 307.0,2.2 317.4,3.1 326.8,3.1 331.9,0.9 342.7,2.5 350.2,3.0 358.9,2.6 365.7,0.6 373.3,0.4 380.6,3.1 387.6,0.0 392.9,0.5 402.6,1.2 409.3,0.3 420.2,1.4 426.4,0.2 431.8,0.5 440.8,0.5 446.1,1.6 450.3,3.2 450.3,3"/></svg>
<span class="t" style="left:314px;top:60px;font-size:27.5px;font-family:'DejaVu Sans',sans-serif;font-weight:700;font-style:italic;color:#000"><span style="font-size:42.5px">R</span><span style="display:inline-block;margin-left:-1px;transform:scaleX(1.43);transform-origin:0 50%">eceipt</span></span>
<span class="t" style="left:227.43px;top:129.5px;font-size:19px;color:#111;letter-spacing:0.591px;font-family:'DejaVu Serif',serif;-webkit-text-stroke:.35px #111;">Adress: 1234 Lorem Ipsum, Dolor</span>
<span class="t" style="left:227.18px;top:158.2px;font-size:19px;color:#111;letter-spacing:0.866px;font-family:'DejaVu Serif',serif;-webkit-text-stroke:.35px #111;">Tel: 123-456-7890</span>
<span class="t" style="left:226.3px;top:206px;font-size:19px;color:#111;letter-spacing:0.846px;font-family:'DejaVu Serif',serif;-webkit-text-stroke:.35px #111;">Date: 01-01-2018</span>
<span class="t" style="left:500.05px;top:206px;font-size:19px;color:#111;letter-spacing:0.24px;font-family:'DejaVu Serif',serif;-webkit-text-stroke:.35px #111;">10:35</span>
<span class="t" style="left:211.4px;top:271px;font-size:19px;color:#111;letter-spacing:0.604px;font-family:'DejaVu Serif',serif;-webkit-text-stroke:.35px #111;">Lorem</span>
<span class="t" style="left:527.75px;top:272px;font-size:19px;color:#111;letter-spacing:0.886px;font-family:'DejaVu Serif',serif;-webkit-text-stroke:.35px #111;">6.50</span>
<span class="t" style="left:211.4px;top:300px;font-size:19px;color:#111;letter-spacing:0.861px;font-family:'DejaVu Serif',serif;-webkit-text-stroke:.35px #111;">Ipsum</span>
<span class="t" style="left:527.5px;top:301px;font-size:19px;color:#111;letter-spacing:0.97px;font-family:'DejaVu Serif',serif;-webkit-text-stroke:.35px #111;">7.50</span>
<span class="t" style="left:211.4px;top:329px;font-size:19px;color:#111;letter-spacing:0.701px;font-family:'DejaVu Serif',serif;-webkit-text-stroke:.35px #111;">Lorem Ipsum</span>
<span class="t" style="left:516.5px;top:330px;font-size:19px;color:#111;letter-spacing:0.455px;font-family:'DejaVu Serif',serif;-webkit-text-stroke:.35px #111;">48.00</span>
<span class="t" style="left:211.4px;top:358px;font-size:19px;color:#111;letter-spacing:0.604px;font-family:'DejaVu Serif',serif;-webkit-text-stroke:.35px #111;">Lorem</span>
<span class="t" style="left:527.88px;top:359px;font-size:19px;color:#111;letter-spacing:0.845px;font-family:'DejaVu Serif',serif;-webkit-text-stroke:.35px #111;">9.30</span>
<span class="t" style="left:211.4px;top:387px;font-size:19px;color:#111;letter-spacing:1.36px;font-family:'DejaVu Serif',serif;-webkit-text-stroke:.35px #111;">Lorem I</span>
<span class="t" style="left:517.25px;top:388px;font-size:19px;color:#111;letter-spacing:0.268px;font-family:'DejaVu Serif',serif;-webkit-text-stroke:.35px #111;">11.90</span>
<span class="t" style="left:211.4px;top:416px;font-size:19px;color:#111;letter-spacing:0.861px;font-family:'DejaVu Serif',serif;-webkit-text-stroke:.35px #111;">Ipsum</span>
<span class="t" style="left:527.75px;top:417px;font-size:19px;color:#111;letter-spacing:0.886px;font-family:'DejaVu Serif',serif;-webkit-text-stroke:.35px #111;">1.20</span>
<span class="t" style="left:211.4px;top:445px;font-size:19px;color:#111;letter-spacing:0.701px;font-family:'DejaVu Serif',serif;-webkit-text-stroke:.35px #111;">Lorem Ipsum</span>
<span class="t" style="left:526.75px;top:446px;font-size:19px;color:#111;letter-spacing:1.22px;font-family:'DejaVu Serif',serif;-webkit-text-stroke:.35px #111;">0.40</span>
<svg class="a" style="left:211px;top:190.7px" width="379" height="3" viewBox="0 0 379 3"><line x1="0" y1="1.5" x2="379" y2="1.5" stroke="#111" stroke-width="2" stroke-dasharray="5.2 4.2"/></svg>
<svg class="a" style="left:211px;top:240.2px" width="379" height="3" viewBox="0 0 379 3"><line x1="0" y1="1.5" x2="379" y2="1.5" stroke="#111" stroke-width="2" stroke-dasharray="5.2 4.2"/></svg>
<svg class="a" style="left:211px;top:482.0px" width="379" height="3" viewBox="0 0 379 3"><line x1="0" y1="1.5" x2="379" y2="1.5" stroke="#111" stroke-width="2" stroke-dasharray="5.2 4.2"/></svg>
<span class="t" style="left:219.12px;top:508.5px;font-size:25px;color:#111;letter-spacing:-0.972px;font-family:'DejaVu Serif Condensed','DejaVu Serif',serif;-webkit-text-stroke:.35px #111;">AMOUNT</span>
<span class="t" style="left:504.38px;top:507.5px;font-size:26px;color:#111;letter-spacing:2.715px;font-family:'DejaVu Serif',serif;-webkit-text-stroke:.35px #111;">84.80</span>
<span class="t" style="left:217.5px;top:559.5px;font-size:19px;color:#111;letter-spacing:2.438px;font-family:'DejaVu Serif',serif;-webkit-text-stroke:.35px #111;">Sub-total</span>
<span class="t" style="left:516.5px;top:559.5px;font-size:19px;color:#111;letter-spacing:0.58px;font-family:'DejaVu Serif',serif;-webkit-text-stroke:.35px #111;">76.80</span>
<span class="t" style="left:217.5px;top:587px;font-size:19px;color:#111;letter-spacing:1.69px;font-family:'DejaVu Serif',serif;-webkit-text-stroke:.35px #111;">Sales Tax</span>
<span class="t" style="left:527.75px;top:587px;font-size:19px;color:#111;letter-spacing:1.053px;font-family:'DejaVu Serif',serif;-webkit-text-stroke:.35px #111;">8.00</span>
<span class="t" style="left:218px;top:614.5px;font-size:19px;color:#111;letter-spacing:1.759px;font-family:'DejaVu Serif',serif;-webkit-text-stroke:.35px #111;">Balance</span>
<span class="t" style="left:515.75px;top:614.5px;font-size:19px;color:#111;letter-spacing:0.768px;font-family:'DejaVu Serif',serif;-webkit-text-stroke:.35px #111;">84.80</span>
<svg class="a" style="left:264px;top:661px" width="272" height="79" viewBox="0 0 272 79"><rect x="1.00" y="0" width="2.50" height="79" fill="#000"/><rect x="6.00" y="0" width="3.00" height="79" fill="#000"/><rect x="12.50" y="0" width="1.50" height="79" fill="#000"/><rect x="23.50" y="0" width="6.50" height="79" fill="#000"/><rect x="32.50" y="0" width="1.50" height="79" fill="#000"/><rect x="39.50" y="0" width="4.00" height="79" fill="#000"/><rect x="45.50" y="0" width="1.50" height="79" fill="#000"/><rect x="55.50" y="0" width="3.50" height="79" fill="#000"/><rect x="61.50" y="0" width="1.50" height="79" fill="#000"/><rect x="67.00" y="0" width="4.50" height="79" fill="#000"/><rect x="79.50" y="0" width="1.50" height="79" fill="#000"/><rect x="85.50" y="0" width="1.50" height="79" fill="#000"/><rect x="89.00" y="0" width="2.00" height="79" fill="#000"/><rect x="99.50" y="0" width="4.00" height="79" fill="#000"/><rect x="106.00" y="0" width="2.00" height="79" fill="#000"/><rect x="111.00" y="0" width="2.00" height="79" fill="#000"/><rect x="115.00" y="0" width="2.00" height="79" fill="#000"/><rect x="122.00" y="0" width="6.50" height="79" fill="#000"/><rect x="133.50" y="0" width="2.50" height="79" fill="#000"/><rect x="138.00" y="0" width="3.50" height="79" fill="#000"/><rect x="145.50" y="0" width="1.50" height="79" fill="#000"/><rect x="156.00" y="0" width="1.50" height="79" fill="#000"/><rect x="166.00" y="0" width="1.50" height="79" fill="#000"/><rect x="171.00" y="0" width="2.00" height="79" fill="#000"/><rect x="175.00" y="0" width="4.00" height="79" fill="#000"/><rect x="188.00" y="0" width="3.50" height="79" fill="#000"/><rect x="193.50" y="0" width="2.00" height="79" fill="#000"/><rect x="199.50" y="0" width="1.50" height="79" fill="#000"/><rect x="204.50" y="0" width="1.50" height="79" fill="#000"/><rect x="209.00" y="0" width="4.00" height="79" fill="#000"/><rect x="222.00" y="0" width="7.50" height="79" fill="#000"/><rect x="232.00" y="0" width="1.50" height="79" fill="#000"/><rect x="237.00" y="0" width="2.50" height="79" fill="#000"/><rect x="244.00" y="0" width="3.50" height="79" fill="#000"/><rect x="255.00" y="0" width="5.50" height="79" fill="#000"/><rect x="262.00" y="0" width="2.00" height="79" fill="#000"/><rect x="266.00" y="0" width="3.50" height="79" fill="#000"/></svg>
<div style="left:0px;top:800px;width:720px;height:64px;background:#131230"></div>
<span class="t" style="left:24px;top:819px;font-size:27px;color:#fff;letter-spacing:-0.5px;">VectorStock</span>
<span class="t" style="left:159.88px;top:819px;font-size:12px;color:#fff;">®</span>
<span class="t" style="left:578px;top:830px;font-size:11px;color:#fff;font-weight:700;">VectorStock.com/21405166</span></div></div></div>
<span class="t" style="left:1653.12px;top:1240.6px;font-size:25.2px;color:#fff;">1</span>
<div style="left:2716px;top:244px;width:102px;height:106px;background:#6d6057"></div>
<div style="left:2716px;top:350px;width:102px;height:106px;background:#5f534c"></div>
<div style="left:2716px;top:456px;width:102px;height:105px;background:#564b45"></div>
<div style="left:2716px;top:561px;width:102px;height:105px;background:#4d433e"></div>
<svg class="a" style="left:2716px;top:244px" width="102" height="422" viewBox="0 0 102 422"><circle cx="53" cy="53" r="20.6" fill="#fff"/><rect x="48.90" y="26.40" width="8.2" height="10.00" rx="2.4" fill="#fff" transform="rotate(18.0 53 53)"/><rect x="48.90" y="26.40" width="8.2" height="10.00" rx="2.4" fill="#fff" transform="rotate(54.0 53 53)"/><rect x="48.90" y="26.40" width="8.2" height="10.00" rx="2.4" fill="#fff" transform="rotate(90.0 53 53)"/><rect x="48.90" y="26.40" width="8.2" height="10.00" rx="2.4" fill="#fff" transform="rotate(126.0 53 53)"/><rect x="48.90" y="26.40" width="8.2" height="10.00" rx="2.4" fill="#fff" transform="rotate(162.0 53 53)"/><rect x="48.90" y="26.40" width="8.2" height="10.00" rx="2.4" fill="#fff" transform="rotate(198.0 53 53)"/><rect x="48.90" y="26.40" width="8.2" height="10.00" rx="2.4" fill="#fff" transform="rotate(234.0 53 53)"/><rect x="48.90" y="26.40" width="8.2" height="10.00" rx="2.4" fill="#fff" transform="rotate(270.0 53 53)"/><rect x="48.90" y="26.40" width="8.2" height="10.00" rx="2.4" fill="#fff" transform="rotate(306.0 53 53)"/><rect x="48.90" y="26.40" width="8.2" height="10.00" rx="2.4" fill="#fff" transform="rotate(342.0 53 53)"/><circle cx="53" cy="53" r="10.6" fill="#6d6057"/><circle cx="46.8" cy="143.8" r="8" fill="#fff"/><path fill="#fff" d="M29.3 176.5 V171 C29.3 161 37 154 47 154 C57 154 64.6 161 64.6 171 V176.5 C60 181 54 183.8 47 183.8 C40 183.8 34 181 29.3 176.5Z"/><circle cx="68" cy="147.2" r="8.4" fill="#fff"/><rect x="66.20" y="135.80" width="3.6" height="7.00" rx="1" fill="#fff" transform="rotate(18.0 68 147.2)"/><rect x="66.20" y="135.80" width="3.6" height="7.00" rx="1" fill="#fff" transform="rotate(54.0 68 147.2)"/><rect x="66.20" y="135.80" width="3.6" height="7.00" rx="1" fill="#fff" transform="rotate(90.0 68 147.2)"/><rect x="66.20" y="135.80" width="3.6" height="7.00" rx="1" fill="#fff" transform="rotate(126.0 68 147.2)"/><rect x="66.20" y="135.80" width="3.6" height="7.00" rx="1" fill="#fff" transform="rotate(162.0 68 147.2)"/><rect x="66.20" y="135.80" width="3.6" height="7.00" rx="1" fill="#fff" transform="rotate(198.0 68 147.2)"/><rect x="66.20" y="135.80" width="3.6" height="7.00" rx="1" fill="#fff" transform="rotate(234.0 68 147.2)"/><rect x="66.20" y="135.80" width="3.6" height="7.00" rx="1" fill="#fff" transform="rotate(270.0 68 147.2)"/><rect x="66.20" y="135.80" width="3.6" height="7.00" rx="1" fill="#fff" transform="rotate(306.0 68 147.2)"/><rect x="66.20" y="135.80" width="3.6" height="7.00" rx="1" fill="#fff" transform="rotate(342.0 68 147.2)"/><circle cx="68" cy="147.2" r="4.4" fill="#5f534c"/><g transform="translate(55 266) rotate(14)" fill="#fff"><circle cx="0" cy="-23.5" r="4.4"/><path d="M-14 -4 C-14 -16 -8 -22.5 0 -22.5 C8 -22.5 14 -16 14 -4 C14 5 15.5 10.5 19.5 13.5 C21.5 15 21 18.3 18 18.3 H-18 C-21 18.3 -21.5 15 -19.5 13.5 C-15.5 10.5 -14 5 -14 -4Z"/><path d="M-6.3 20.3 H6.3 C5.6 24 3 26.3 0 26.3 C-3 26.3 -5.6 24 -6.3 20.3Z"/></g></svg>
<span class="t" style="left:2750px;top:584px;font-size:62px;font-weight:700;color:#fff;-webkit-text-stroke:4px #fff;transform:skewX(-10deg)">?</span>
<div style="left:2716px;top:666px;width:102px;height:296px;background:#f4f4f4"></div>
<div style="left:2779px;top:925px;width:0;height:0;transform:rotate(-90deg);transform-origin:0 0"><span class="t" style="left:-2.88px;top:-26px;font-size:31.3px;color:#727272;letter-spacing:2.003px;">Insights ONLY</span></div>
<div style="left:0px;top:1623px;width:2681px;height:137px;background:#fff;box-shadow:3px 0 8px rgba(0,0,0,.10);z-index:20;"></div>
<div style="left:0px;top:1619px;width:2681px;height:4px;background:#f14e23;z-index:20;"></div>
<div style="left:2330px;top:1644px;width:99px;height:58px;background:#13ab88;z-index:20;"></div>
<div style="left:2435px;top:1644px;width:96px;height:58px;background:#13ab88;z-index:20;"></div>
<div style="left:2538px;top:1644px;width:122px;height:58px;background:#13ab88;z-index:20;"></div>
<span class="t" style="left:2350.38px;top:1659px;font-size:26px;color:#fff;letter-spacing:-0.517px;z-index:20;">Save</span>
<span class="t" style="left:2455.12px;top:1659px;font-size:26px;color:#fff;letter-spacing:0.816px;z-index:20;">Post</span>
<span class="t" style="left:2558.25px;top:1659px;font-size:26px;color:#fff;letter-spacing:0.144px;z-index:20;">Cancel</span>
<div style="left:0px;top:1760px;width:2818px;height:4px;background:#1d1e1f;z-index:30"></div>
</div>
</body></html>
